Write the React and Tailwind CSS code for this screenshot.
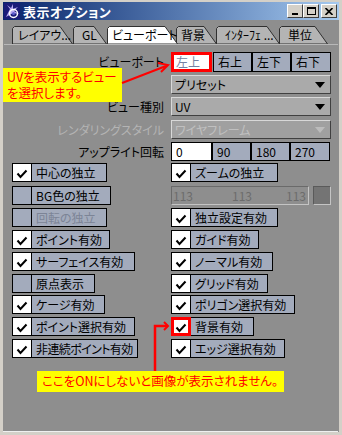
import React from "react";

function Check({ checked, red }) {
  return (
    <div
      className={`relative shrink-0 w-[20px] h-full flex items-center justify-center ${
        red ? "border-[3px] border-[#ff0000]" : "border border-black"
      } ${checked ? "bg-white" : "bg-[#a3abbc]"}`}
    >
      {checked && (
        <svg width="12" height="10" viewBox="0 0 12 10" className="mt-[3px]">
          <path d="M1.5 4.5 L4.5 8 L10.5 1.5" stroke="black" strokeWidth="2" fill="none" />
        </svg>
      )}
    </div>
  );
}

function CheckRow({ checked, label, w, disabled, red, tight }) {
  return (
    <div className="flex h-full" style={{ width: w }}>
      <Check checked={checked} red={red} />
      <div
        className={`flex-1 h-full border border-l-0 border-black bg-[#a3abbc] flex items-center pl-[4px] whitespace-nowrap ${
          disabled ? "text-[#7c8496]" : "text-black"
        } ${tight ? "tracking-[-0.6px]" : ""}`}
      >
        {label}
      </div>
    </div>
  );
}

function Tab({ w, label, active, ml, pl }) {
  return (
    <div className="relative h-[18px] shrink-0" style={{ width: w, marginLeft: ml, zIndex: active ? 10 : 1 }}>
      <svg width={w} height="18" className="absolute left-0 top-0">
        <polygon
          points={`0.5,18 0.5,2.5 2.5,0.5 ${w - 13},0.5 ${w - 0.5},18`}
          fill={active ? "#ffffff" : "#b4b4b4"}
          stroke="#303030"
          strokeWidth="1"
        />
      </svg>
      <div className="relative h-full flex items-center whitespace-nowrap text-black" style={{ paddingLeft: pl }}>
        {label}
      </div>
    </div>
  );
}

function Btn({ label, white, red, w }) {
  return (
    <div
      className={`h-full flex items-center whitespace-nowrap ${
        red
          ? "border-[3px] border-[#ff0000] bg-white text-[#7582a3] pl-[2px]"
          : white
          ? "border border-black bg-white text-black pl-[4px]"
          : "border border-black bg-[#a3abbc] text-black pl-[4px]"
      }`}
      style={{ width: w }}
    >
      {label}
    </div>
  );
}

function Dropdown({ label, disabled }) {
  return (
    <div
      className={`w-[160px] h-full flex items-center justify-between pl-[3px] pr-[5px] border border-t-[#d8d8d8] border-l-[#d8d8d8] border-r-[#404040] border-b-[#404040] ${
        disabled ? "bg-[#a0a0a0] text-[#c0c0c0]" : "bg-[#aaaaaa] text-black"
      }`}
    >
      <span className="whitespace-nowrap">{label}</span>
      <svg width="10" height="6" viewBox="0 0 10 6">
        <path d="M0 0 H10 L5 6 Z" fill={disabled ? "#bcbcbc" : "#000000"} />
      </svg>
    </div>
  );
}

function TopRow({ label, children, mt, h, disabled }) {
  return (
    <div className="flex" style={{ marginTop: mt, height: h }}>
      <div
        className={`w-[152px] flex items-center justify-end whitespace-nowrap ${
          disabled ? "text-[#b4b4b4]" : "text-black"
        }`}
      >
        {label}
      </div>
      <div className="ml-[7px] flex">{children}</div>
    </div>
  );
}

function TwoCol({ left, right, mt }) {
  return (
    <div className="flex h-[19px]" style={{ marginTop: mt }}>
      <div className="w-[159px] h-full">{left}</div>
      <div className="h-full">{right}</div>
    </div>
  );
}

export default function App() {
  return (
    <div className="relative w-[342px] h-[435px] bg-[#d4d0c8] px-[3px] pt-[2px] pb-[3px] flex flex-col overflow-hidden [font-family:'Noto_Sans_CJK_JP',sans-serif] text-[12px] leading-none [font-feature-settings:'palt']">
      {/* title bar */}
      <div className="h-[18px] shrink-0 flex items-center bg-gradient-to-r from-[#0a246a] to-[#a6caf0] pr-[2px]">
        <svg width="16" height="16" viewBox="0 0 16 16" className="ml-[1px] shrink-0">
          <rect width="16" height="16" fill="#1c1c78" />
          <path d="M2 14 L6 6 L3 2 L7 5 L9 1 L9 6 L14 4 L10 8 L15 11 L9 10 Z" fill="#b8a8f0" />
          <circle cx="9.5" cy="10.5" r="4" fill="none" stroke="#ffffff" strokeWidth="1.5" />
          <circle cx="9.5" cy="10.5" r="1.5" fill="#6060d0" />
        </svg>
        <span className="ml-[3px] text-white font-bold text-[13px] tracking-[0.5px]">表示オプション</span>
        <div className="ml-auto flex items-center">
          <div className="w-[16px] h-[14px] bg-[#d4d0c8] border border-t-white border-l-white border-r-[#404040] border-b-[#404040] flex items-end justify-center pb-[2px]">
            <div className="w-[6px] h-[2px] bg-black" />
          </div>
          <div className="w-[16px] h-[14px] bg-[#d4d0c8] border border-t-white border-l-white border-r-[#404040] border-b-[#404040] flex items-center justify-center">
            <div className="w-[9px] h-[8px] border border-black border-t-2" />
          </div>
          <div className="ml-[2px] w-[16px] h-[14px] bg-[#d4d0c8] border border-t-white border-l-white border-r-[#404040] border-b-[#404040] flex items-center justify-center">
            <svg width="8" height="7" viewBox="0 0 8 7">
              <path d="M0.5 0 L7.5 7 M7.5 0 L0.5 7" stroke="black" strokeWidth="1.6" />
            </svg>
          </div>
        </div>
      </div>

      {/* body */}
      <div className="flex-1 bg-[#8e8e8e] pt-[6px] flex flex-col">
        {/* tabs */}
        <div className="flex pl-[9px]">
          <Tab w={61} label="レイアウ..." pl={6} ml={0} />
          <Tab w={34} label="GL" pl={9} ml={0} />
          <Tab w={71} label="ビューポート" pl={5} ml={0} active />
          <Tab w={41} label="背景" pl={5} ml={-2} />
          <Tab w={64} label="ｲﾝﾀｰﾌｪ ..." pl={9} ml={-1} />
          <Tab w={49} label="単位" pl={9} ml={-1} />
        </div>
        <div className="h-[1px] bg-[#b8b8b8] mx-[1px]" />

        <div className="flex flex-col pl-[9px]">
          <TopRow label="ビューポート" mt={7} h={20}>
            <Btn label="左上" red w={41} />
            <div className="ml-[1px] flex h-full">
              <Btn label="右上" w={39} />
              <Btn label="左下" w={39} />
              <Btn label="右下" w={40} />
            </div>
          </TopRow>
          <TopRow label="" mt={3} h={19}>
            <Dropdown label="プリセット" />
          </TopRow>
          <TopRow label="ビュー種別" mt={3} h={19}>
            <Dropdown label="UV" />
          </TopRow>
          <TopRow label="レンダリングスタイル" mt={4} h={19} disabled>
            <Dropdown label="ワイヤフレーム" disabled />
          </TopRow>
          <TopRow label="アップライト回転" mt={3} h={19}>
            <Btn label="0" white w={41} />
            <Btn label="90" w={39} />
            <Btn label="180" w={39} />
            <Btn label="270" w={40} />
          </TopRow>

          <TwoCol
            mt={2}
            left={<CheckRow checked label="中心の独立" w={95} />}
            right={<CheckRow checked label="ズームの独立" w={107} />}
          />
          <TwoCol
            mt={4}
            left={<CheckRow label="BG色の独立" w={99} />}
            right={
              <div className="flex h-full">
                <div className="w-[138px] h-full border border-t-[#6a6a6a] border-l-[#6a6a6a] border-r-[#c4c4c4] border-b-[#c4c4c4] flex items-center text-[#6c6c6c] relative">
                  <span className="absolute left-[1px]">113</span>
                  <span className="absolute left-[60px]">113</span>
                  <span className="absolute left-[114px]">113</span>
                </div>
                <div className="ml-[4px] w-[18px] h-full bg-[#747474] border border-t-[#5a5a5a] border-l-[#5a5a5a] border-r-[#c4c4c4] border-b-[#c4c4c4]" />
              </div>
            }
          />
          <TwoCol
            mt={3}
            left={<CheckRow label="回転の独立" w={95} disabled />}
            right={<CheckRow checked label="独立設定有効" w={107} />}
          />
          <TwoCol
            mt={3}
            left={<CheckRow checked label="ポイント有効" w={98} />}
            right={<CheckRow checked label="ガイド有効" w={88} />}
          />
          <TwoCol
            mt={3}
            left={<CheckRow checked label="サーフェイス有効" w={123} />}
            right={<CheckRow checked label="ノーマル有効" w={102} />}
          />
          <TwoCol
            mt={3}
            left={<CheckRow label="原点表示" w={83} />}
            right={<CheckRow checked label="グリッド有効" w={97} />}
          />
          <TwoCol
            mt={2}
            left={<CheckRow checked label="ケージ有効" w={93} />}
            right={<CheckRow checked label="ポリゴン選択有効" w={124} />}
          />
          <TwoCol
            mt={3}
            left={<CheckRow checked label="ポイント選択有効" w={123} />}
            right={<CheckRow checked red label="背景有効" w={83} />}
          />
          <TwoCol
            mt={3}
            left={<CheckRow checked label="非連続ポイント有効" w={126} tight />}
            right={<CheckRow checked label="エッジ選択有効" w={114} />}
          />
        </div>
      </div>
      <div className="absolute left-[3px] right-[4px] bottom-[3px] h-[1px] bg-[#f0f0f0]" />

      {/* annotations */}
      <div className="absolute left-[3px] top-[68px] w-[119px] h-[34px] bg-[#ffff00] text-[#ff0000] text-[12.5px] leading-[16px] pl-[4px] pt-[1px] whitespace-nowrap">
        <div>UVを表示するビュー</div>
        <div>を選択します。</div>
      </div>
      <svg className="absolute left-0 top-0" width="342" height="435" style={{ pointerEvents: "none" }}>
        <path d="M122 83 L166 66" stroke="#ff0000" strokeWidth="2" fill="none" />
        <path d="M158 63 L168 65 L161 72" stroke="#ff0000" strokeWidth="2" fill="none" />
        <path d="M155 371 L155 326 L168 326" stroke="#ff0000" strokeWidth="2.5" fill="none" />
        <path d="M164 322 L168 326 L164 330" stroke="#ff0000" strokeWidth="2" fill="none" />
      </svg>
      <div className="absolute left-[37px] top-[371px] w-[247px] h-[21px] bg-[#ffff00] text-[#ff0000] text-[12.5px] flex items-center pl-[5px] whitespace-nowrap">
        ここをONにしないと画像が表示されません。
      </div>
    </div>
  );
}
